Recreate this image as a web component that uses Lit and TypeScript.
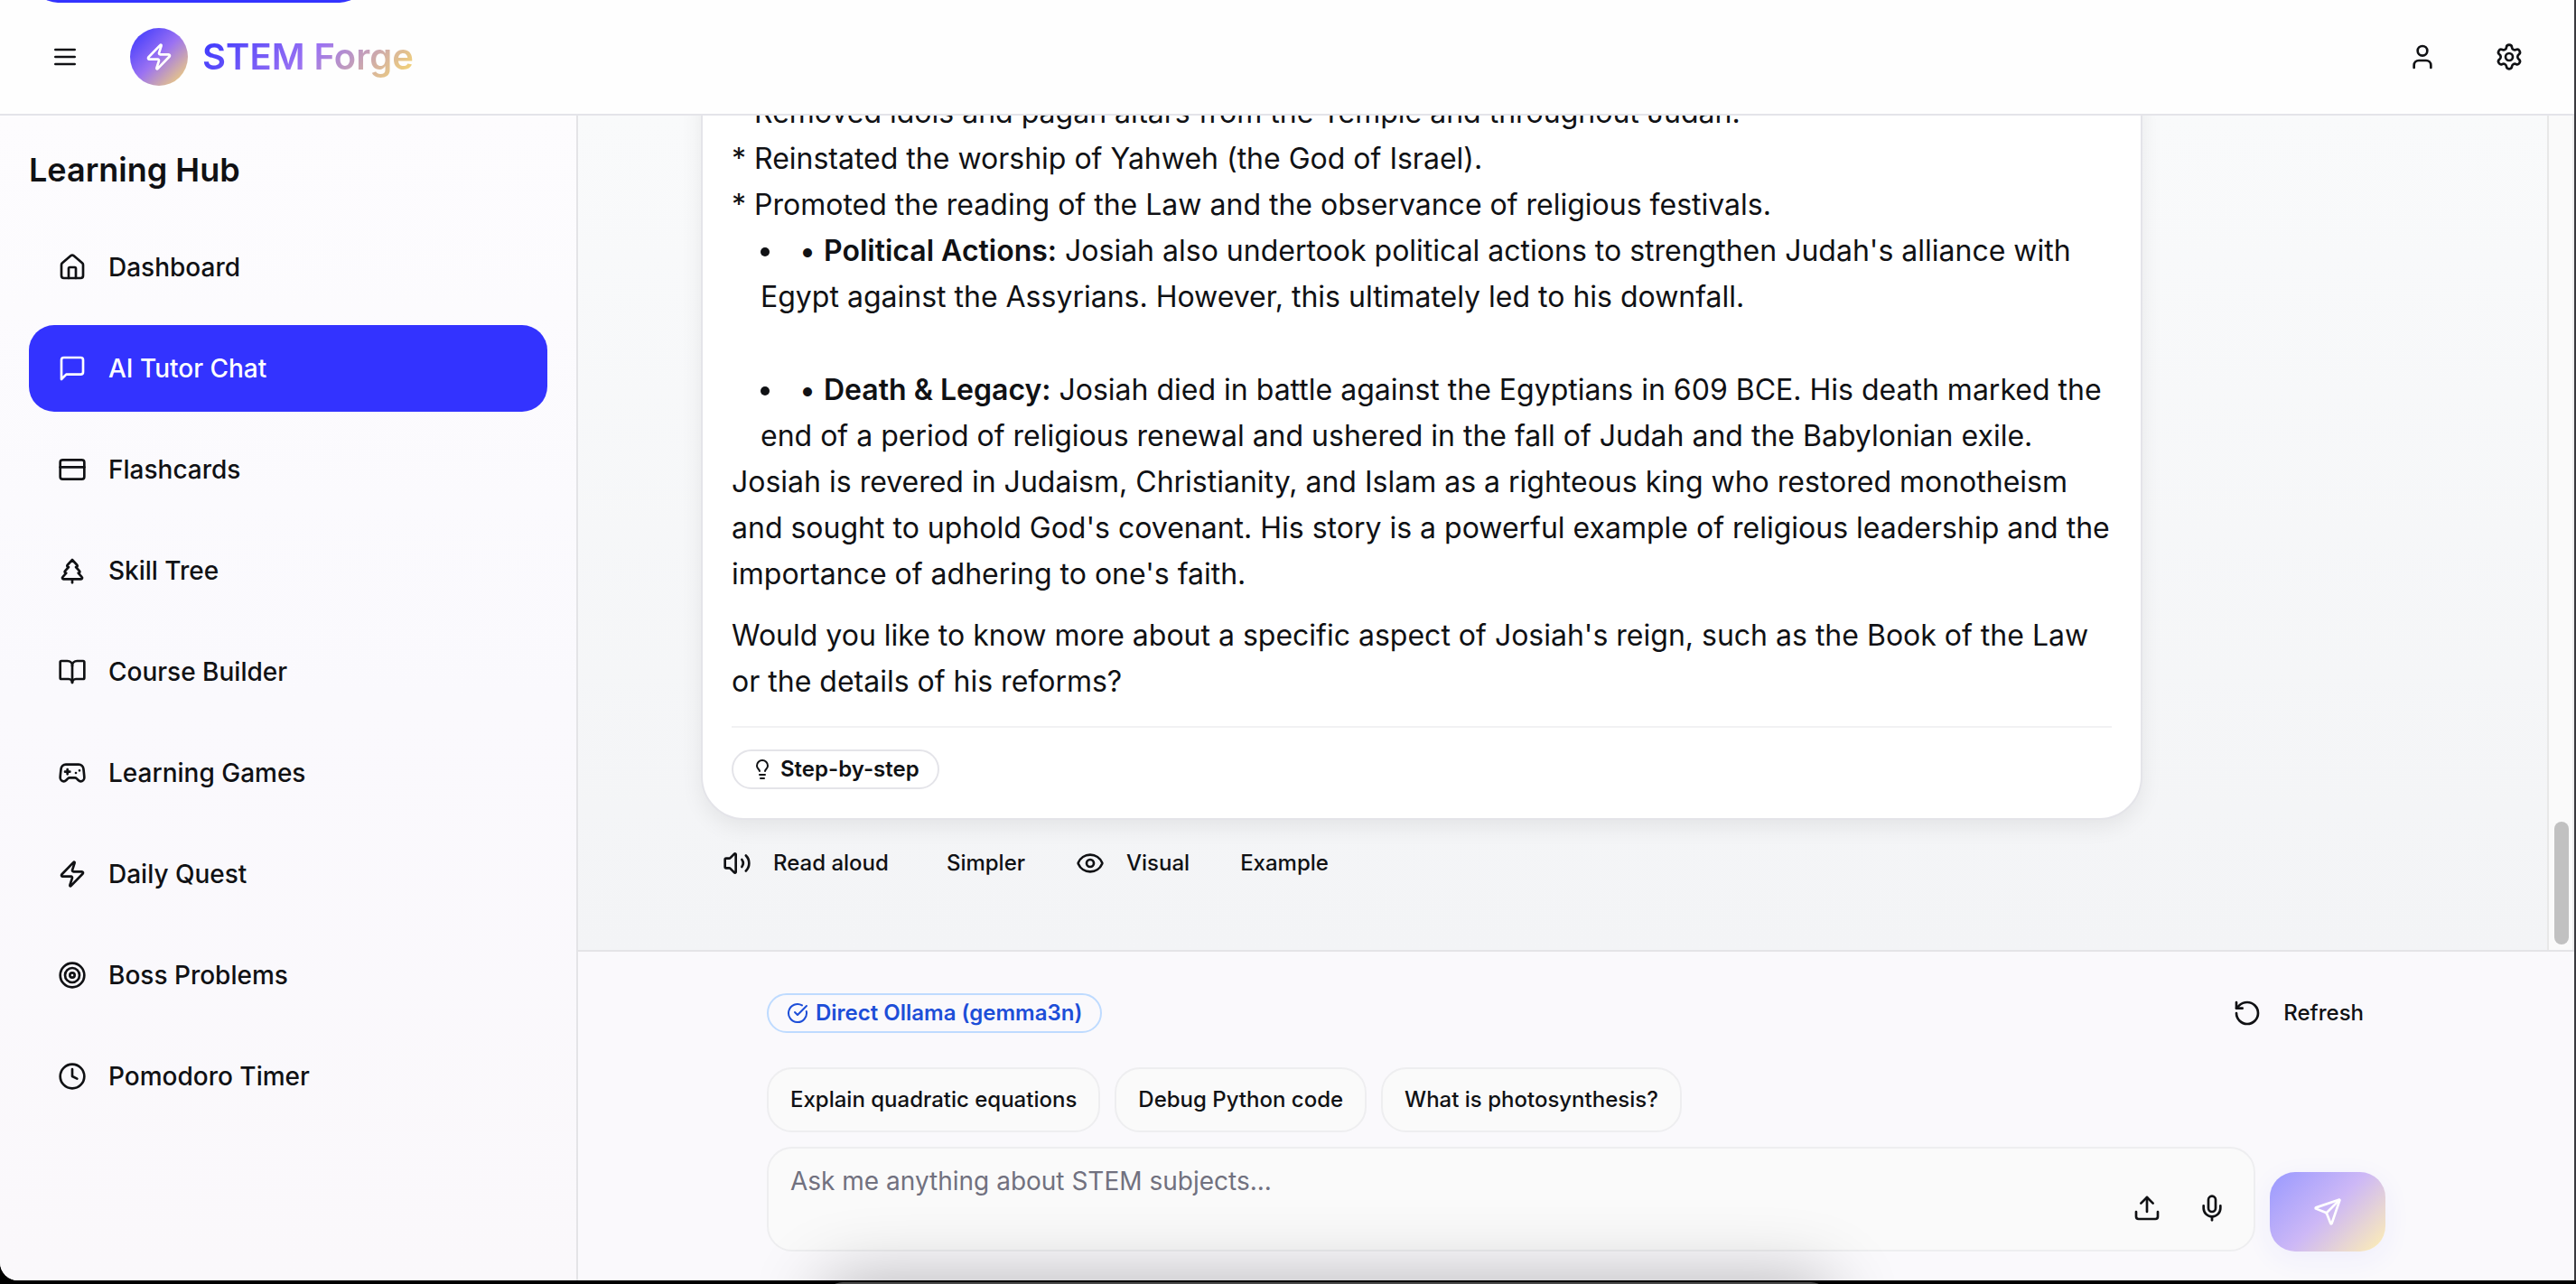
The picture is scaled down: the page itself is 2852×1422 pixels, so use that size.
import { LitElement, html, css, svg, type TemplateResult, type SVGTemplateResult } from "lit";
import { customElement, property } from "lit/decorators.js";
import { classMap } from "lit/directives/class-map.js";

const ICONS: Record<string, SVGTemplateResult> = {
  menu: svg`<path d="M4 6h16M4 12h16M4 18h16"/>`,
  zap: svg`<path d="M4 14a1 1 0 0 1-.78-1.63l9.9-10.2a.5.5 0 0 1 .86.46l-1.92 6.02A1 1 0 0 0 13 10h7a1 1 0 0 1 .78 1.63l-9.9 10.2a.5.5 0 0 1-.86-.46l1.92-6.02A1 1 0 0 0 11 14z"/>`,
  user: svg`<path d="M19 21v-2a4 4 0 0 0-4-4H9a4 4 0 0 0-4 4v2"/><circle cx="12" cy="7" r="4"/>`,
  settings: svg`<path d="M9.671 4.136a2.34 2.34 0 0 1 4.659 0 2.34 2.34 0 0 0 3.319 1.915 2.34 2.34 0 0 1 2.33 4.033 2.34 2.34 0 0 0 0 3.831 2.34 2.34 0 0 1-2.33 4.033 2.34 2.34 0 0 0-3.319 1.915 2.34 2.34 0 0 1-4.659 0 2.34 2.34 0 0 0-3.32-1.915 2.34 2.34 0 0 1-2.33-4.033 2.34 2.34 0 0 0 0-3.831A2.34 2.34 0 0 1 6.35 6.051a2.34 2.34 0 0 0 3.319-1.915"/><circle cx="12" cy="12" r="3"/>`,
  home: svg`<path d="M15 21v-8a1 1 0 0 0-1-1h-4a1 1 0 0 0-1 1v8"/><path d="M3 10a2 2 0 0 1 .709-1.528l7-5.999a2 2 0 0 1 2.582 0l7 5.999A2 2 0 0 1 21 10v9a2 2 0 0 1-2 2H5a2 2 0 0 1-2-2z"/>`,
  chat: svg`<path d="M21 15a2 2 0 0 1-2 2H7l-4 4V5a2 2 0 0 1 2-2h14a2 2 0 0 1 2 2z"/>`,
  card: svg`<rect width="20" height="16" x="2" y="4" rx="2"/><path d="M2 10h20"/>`,
  tree: svg`<path d="m17 14 3 3.3a1 1 0 0 1-.7 1.7H4.7a1 1 0 0 1-.7-1.7L7 14h-.3a1 1 0 0 1-.7-1.7L9 9h-.2A1 1 0 0 1 8 7.3L12 3l4 4.3a1 1 0 0 1-.8 1.7H15l3 3.3a1 1 0 0 1-.7 1.7H17Z"/><path d="M12 22v-3"/>`,
  book: svg`<path d="M12 7v14"/><path d="M3 18a1 1 0 0 1-1-1V4a1 1 0 0 1 1-1h5a4 4 0 0 1 4 4 4 4 0 0 1 4-4h5a1 1 0 0 1 1 1v13a1 1 0 0 1-1 1h-6a3 3 0 0 0-3 3 3 3 0 0 0-3-3z"/>`,
  gamepad: svg`<path d="M6 11h4M8 9v4M15 12h.01M18 10h.01"/><path d="M17.32 5H6.68a4 4 0 0 0-3.978 3.59c-.006.052-.01.101-.017.152C2.604 9.416 2 14.456 2 16a3 3 0 0 0 3 3c1 0 1.5-.5 2-1l1.414-1.414A2 2 0 0 1 9.828 16h4.344a2 2 0 0 1 1.414.586L17 18c.5.5 1 1 2 1a3 3 0 0 0 3-3c0-1.545-.604-6.584-.685-7.258-.007-.05-.011-.1-.017-.151A4 4 0 0 0 17.32 5z"/>`,
  target: svg`<circle cx="12" cy="12" r="10"/><circle cx="12" cy="12" r="6"/><circle cx="12" cy="12" r="2"/>`,
  clock: svg`<circle cx="12" cy="12" r="10"/><path d="M12 6v6l4 2"/>`,
  bulb: svg`<path d="M15 14c.2-1 .7-1.7 1.5-2.5 1-.9 1.5-2.2 1.5-3.5A6 6 0 0 0 6 8c0 1 .2 2.2 1.5 3.5.7.7 1.3 1.5 1.5 2.5"/><path d="M9 18h6M10 22h4"/>`,
  volume: svg`<path d="M11 4.702a.705.705 0 0 0-1.203-.498L6.413 7.587A1.4 1.4 0 0 1 5.416 8H3a1 1 0 0 0-1 1v6a1 1 0 0 0 1 1h2.416a1.4 1.4 0 0 1 .997.413l3.383 3.384A.705.705 0 0 0 11 19.298z"/><path d="M16 9a5 5 0 0 1 0 6"/><path d="M19.364 18.364a9 9 0 0 0 0-12.728"/>`,
  eye: svg`<path d="M2.062 12.348a1 1 0 0 1 0-.696 10.75 10.75 0 0 1 19.876 0 1 1 0 0 1 0 .696 10.75 10.75 0 0 1-19.876 0"/><circle cx="12" cy="12" r="3"/>`,
  check: svg`<path d="M21.801 10A10 10 0 1 1 17 3.335"/><path d="m9 11 3 3L22 4"/>`,
  refresh: svg`<path d="M3 12a9 9 0 1 0 9-9 9.75 9.75 0 0 0-6.74 2.74L3 8"/><path d="M3 3v5h5"/>`,
  upload: svg`<path d="M12 3v12"/><path d="m17 8-5-5-5 5"/><path d="M21 15v4a2 2 0 0 1-2 2H5a2 2 0 0 1-2-2v-4"/>`,
  mic: svg`<path d="M12 19v3"/><path d="M19 10v2a7 7 0 0 1-14 0v-2"/><rect x="9" y="2" width="6" height="13" rx="3"/>`,
  send: svg`<path d="M14.536 21.686a.5.5 0 0 0 .937-.024l6.5-19a.496.496 0 0 0-.635-.635l-19 6.5a.5.5 0 0 0-.024.937l7.93 3.18a2 2 0 0 1 1.112 1.11z"/><path d="m21.854 2.147-10.94 10.939"/>`,
};

@customElement("ui-icon")
export class UiIcon extends LitElement {
  @property() name = "menu";
  static styles = css`
    :host { display: block; width: 32px; height: 32px; flex: none; }
    .glyph { display: block; width: 100%; height: 100%; fill: none; stroke: currentColor; stroke-width: 2; stroke-linecap: round; stroke-linejoin: round; }
  `;
  render(): TemplateResult {
    return html`<svg class="glyph" viewBox="0 0 24 24" aria-hidden="true">${ICONS[this.name]}</svg>`;
  }
}

const base = css`
  *, *::before, *::after { box-sizing: border-box; }
  button, textarea { font: inherit; color: inherit; margin: 0; background: none; border: 0; padding: 0; }
  button { cursor: pointer; }
  a { color: inherit; text-decoration: none; }
  .icon-btn { display: grid; place-items: center; width: 80px; height: 80px; border-radius: 28px; }
  .text-btn { display: flex; align-items: center; gap: 24px; height: 72px; padding: 0 24px; border-radius: 28px; font-size: 24px; line-height: 32px; font-weight: 500; white-space: nowrap; }
  .pill { display: inline-flex; align-items: center; gap: 8px; height: 44px; padding: 0 20px; border: 2px solid #e4e4e9; border-radius: 22px; font-size: 24px; line-height: 32px; font-weight: 600; white-space: nowrap; }
  .pill ui-icon { width: 24px; height: 24px; }
`;

@customElement("app-header")
export class AppHeader extends LitElement {
  static styles = [base, css`
    :host { display: block; }
    .bar { position: relative; display: flex; align-items: center; justify-content: space-between; height: 128px; padding: 0 32px; background: #fefefe; border-bottom: 2px solid #e4e4e9; }
    .skip { position: absolute; left: 36px; top: -69px; width: 368px; height: 72px; border-radius: 28px; background: #3333ff; color: #fff; }
    .side { display: flex; align-items: center; gap: 32px; }
    .actions { display: flex; gap: 16px; }
    .brand { display: flex; align-items: center; gap: 16px; }
    .logo { display: grid; place-items: center; width: 64px; height: 64px; border-radius: 50%; color: #fff; background: linear-gradient(135deg, #3333ff 0%, #9b72f2 50%, #ffe066 100%); }
    .name { margin: 0; font-size: 40px; line-height: 56px; font-weight: 600; color: transparent; background: linear-gradient(135deg, #3333ff 0%, #9b72f2 50%, #ffe066 100%); background-clip: text; -webkit-background-clip: text; }
  `];
  render() {
    return html`
      <header class="bar">
        <a class="skip" href="#main" aria-label="Main content"></a>
        <div class="side">
          <button class="icon-btn" aria-label="Menu"><ui-icon name="menu"></ui-icon></button>
          <div class="brand">
            <span class="logo"><ui-icon name="zap"></ui-icon></span>
            <h1 class="name">STEM Forge</h1>
          </div>
        </div>
        <div class="actions">
          <button class="icon-btn" aria-label="Profile"><ui-icon name="user"></ui-icon></button>
          <button class="icon-btn" aria-label="Settings"><ui-icon name="settings"></ui-icon></button>
        </div>
      </header>`;
  }
}

@customElement("app-sidebar")
export class AppSidebar extends LitElement {
  private items = [
    ["home", "Dashboard"],
    ["chat", "AI Tutor Chat"],
    ["card", "Flashcards"],
    ["tree", "Skill Tree"],
    ["book", "Course Builder"],
    ["gamepad", "Learning Games"],
    ["zap", "Daily Quest"],
    ["target", "Boss Problems"],
    ["clock", "Pomodoro Timer"],
  ];
  static styles = [base, css`
    :host { display: block; box-sizing: border-box; width: 640px; flex: none; padding: 32px; border-right: 2px solid #e4e4e7; background: linear-gradient(#fdfcfe, #faf9fd 50%, #faf8fb); }
    .title { margin: 0 0 32px; font-size: 36px; line-height: 56px; font-weight: 600; }
    .nav { display: flex; flex-direction: column; gap: 16px; }
    .item { display: flex; align-items: center; gap: 24px; height: 96px; padding: 0 32px; border-radius: 28px; font-size: 28px; font-weight: 500; }
    .item.active { background: #3333ff; color: #fff; }
  `];
  render() {
    return html`
      <h2 class="title">Learning Hub</h2>
      <nav class="nav" aria-label="Learning Hub">
        ${this.items.map(([icon, label]) => html`
          <a href="#" class=${classMap({ item: true, active: icon === "chat" })}>
            <ui-icon name=${icon}></ui-icon>${label}
          </a>`)}
      </nav>`;
  }
}

@customElement("chat-thread")
export class ChatThread extends LitElement {
  static styles = [base, css`
    :host { display: flex; flex: 1; min-height: 0; background: linear-gradient(#f9fafb, #f3f4f6); }
    .view { flex: 1; min-width: 0; overflow: hidden; display: flex; flex-direction: column; justify-content: flex-end; padding-bottom: 60px; }
    .thread { width: 100%; max-width: 1908px; margin: 0 auto; flex: none; }
    .bubble { width: 84%; max-width: 1596px; padding: 32px; background: #fff; border: 2px solid #e4e4e9; border-radius: 48px; box-shadow: 0 8px 24px rgba(0, 0, 0, 0.07); font-size: 32px; line-height: 51px; }
    .bubble strong { font-weight: 600; }
    .para { margin: 0 0 17px; }
    .list { margin: 0; padding: 0 0 0 32px; list-style: disc inside; }
    .list li + li { margin-top: 52px; }
    .foot { margin-top: 24px; padding-top: 24px; border-top: 2px solid #f1f1f3; display: flex; }
    .actions { display: flex; gap: 16px; padding-top: 12px; }
    .group { display: flex; gap: 8px; }
    .track { width: 30px; flex: none; display: flex; flex-direction: column; justify-content: flex-end; padding: 0 0 6px 6px; background: #fafafa; border-left: 2px solid #e8e8e8; border-right: 2px solid #ededed; }
    .thumb { width: 16px; height: 136px; border-radius: 8px; background: #c1c1c1; }
    .lines { margin: 0; }
    .last { margin: 0; }
  `];
  render() {
    return html`
      <div class="view">
        <div class="thread">
          <article class="bubble">
            <p class="lines">
              * Removed idols and pagan altars from the Temple and throughout Judah.<br />
              * Reinstated the worship of Yahweh (the God of Israel).<br />
              * Promoted the reading of the Law and the observance of religious festivals.
            </p>
            <ul class="list">
              <li>• <strong>Political Actions:</strong> Josiah also undertook political actions to strengthen Judah's alliance with Egypt against the Assyrians. However, this ultimately led to his downfall.</li>
              <li>• <strong>Death &amp; Legacy:</strong> Josiah died in battle against the Egyptians in 609 BCE. His death marked the end of a period of religious renewal and ushered in the fall of Judah and the Babylonian exile.</li>
            </ul>
            <p class="para">Josiah is revered in Judaism, Christianity, and Islam as a righteous king who restored monotheism and sought to uphold God's covenant. His story is a powerful example of religious leadership and the importance of adhering to one's faith.</p>
            <p class="last">Would you like to know more about a specific aspect of Josiah's reign, such as the Book of the Law or the details of his reforms?</p>
            <div class="foot"><span class="pill"><ui-icon name="bulb"></ui-icon>Step-by-step</span></div>
          </article>
          <div class="actions">
            <button class="text-btn"><ui-icon name="volume"></ui-icon>Read aloud</button>
            <div class="group">
              <button class="text-btn">Simpler</button>
              <button class="text-btn"><ui-icon name="eye"></ui-icon>Visual</button>
              <button class="text-btn">Example</button>
            </div>
          </div>
        </div>
      </div>
      <div class="track" aria-hidden="true"><div class="thumb"></div></div>`;
  }
}

@customElement("chat-composer")
export class ChatComposer extends LitElement {
  private prompts = ["Explain quadratic equations", "Debug Python code", "What is photosynthesis?"];
  static styles = [base, css`
    :host { display: block; flex: none; padding: 32px; border-top: 2px solid #e4e4e7; background: #faf9fc; }
    .inner { max-width: 1792px; margin: 0 auto; display: flex; flex-direction: column; }
    .status { display: flex; align-items: center; justify-content: space-between; margin-bottom: 24px; }
    .model { color: #1d4ed8; border-color: #bedbff; }
    .chips { display: flex; gap: 16px; margin-bottom: 16px; }
    .chip { border: 2px solid #eeeef0; background: #fafafa; }
    .row { display: flex; align-items: flex-end; gap: 16px; }
    .field { position: relative; flex: 1; display: flex; }
    .input { width: 100%; height: 116px; padding: 16px 24px; border: 2px solid #eeeef0; border-radius: 28px; background: #fafafa; font-size: 28px; line-height: 40px; resize: none; }
    .input::placeholder { color: #71717f; opacity: 1; }
    .tools { position: absolute; right: 16px; bottom: 16px; display: flex; gap: 8px; }
    .tool { width: 64px; height: 64px; }
    .send { display: grid; place-items: center; width: 128px; height: 88px; border-radius: 28px; color: #fff; background: linear-gradient(135deg, #9999ff 0%, #cdb8f6 50%, #fff0b3 100%); box-shadow: 0 8px 32px rgba(51, 51, 255, 0.06); }
  `];
  render() {
    return html`
      <div class="inner">
        <div class="status">
          <span class="pill model"><ui-icon name="check"></ui-icon>Direct Ollama (gemma3n)</span>
          <button class="text-btn"><ui-icon name="refresh"></ui-icon>Refresh</button>
        </div>
        <div class="chips">
          ${this.prompts.map((p) => html`<button class="text-btn chip">${p}</button>`)}
        </div>
        <div class="row">
          <div class="field">
            <textarea class="input" aria-label="Message" placeholder="Ask me anything about STEM subjects..."></textarea>
            <div class="tools">
              <button class="icon-btn tool" aria-label="Upload"><ui-icon name="upload"></ui-icon></button>
              <button class="icon-btn tool" aria-label="Voice input"><ui-icon name="mic"></ui-icon></button>
            </div>
          </div>
          <button class="send" aria-label="Send"><ui-icon name="send"></ui-icon></button>
        </div>
      </div>`;
  }
}

@customElement("app-root")
export class AppRoot extends LitElement {
  static styles = [base, css`
    :host { display: block; height: 100vh; overflow: hidden; position: relative; background: #000; color: #101114; font-family: Inter, "Liberation Sans", sans-serif; }
    .window { height: 100%; padding: 0 2px 4px 0; background: linear-gradient(to right, #000 50%, #3a3a3f 50%); }
    .page { position: relative; display: flex; flex-direction: column; height: 100%; overflow: hidden; border-radius: 0 0 0 20px; background: #fafafc; }
    .body { flex: 1; min-height: 0; display: flex; }
    .main { flex: 1; min-width: 0; display: flex; flex-direction: column; }
    .edge { position: absolute; left: 0; right: 0; bottom: 0; height: 4px; background: #000; pointer-events: none; }
    .dock { position: absolute; left: 32%; right: 29%; bottom: -78px; height: 80px; border-radius: 20px; background: #4a4a4a; box-shadow: 0 0 80px rgba(0, 0, 0, 0.3); pointer-events: none; }
  `];
  render() {
    return html`
      <div class="window">
        <div class="page">
          <app-header></app-header>
          <div class="body">
            <app-sidebar></app-sidebar>
            <main class="main" id="main">
              <chat-thread></chat-thread>
              <chat-composer></chat-composer>
            </main>
          </div>
        </div>
      </div>
      <div class="edge" aria-hidden="true"></div>
      <div class="dock" aria-hidden="true"></div>`;
  }
}
